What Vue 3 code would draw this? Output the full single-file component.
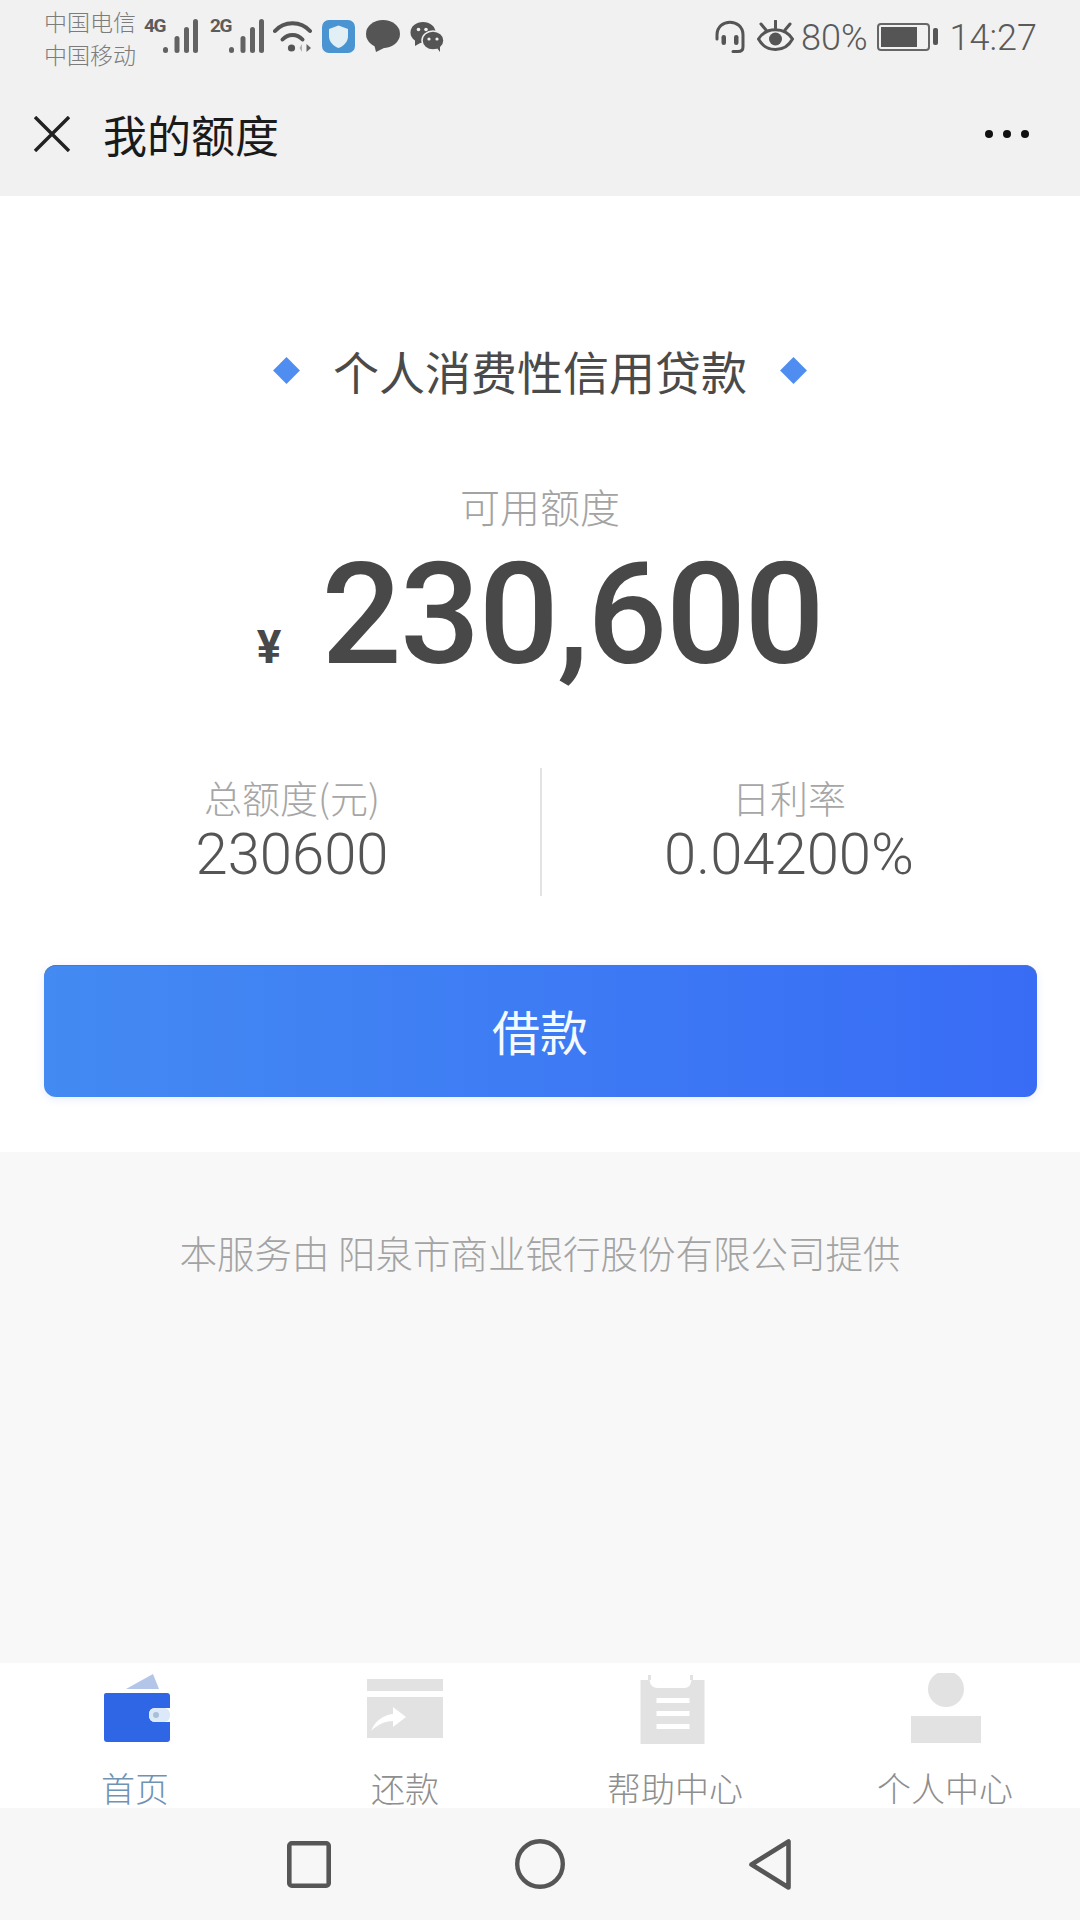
<script setup>
const signal = [
  { x: 0, h: 6 },
  { x: 11.5, h: 17 },
  { x: 21, h: 26 },
  { x: 30, h: 34 }
]
const stats = [
  { label: '总额度(元)', value: '230600' },
  { label: '日利率', value: '0.04200%' }
]
const tabs = ['首页', '还款', '帮助中心', '个人中心']
</script>

<template>
  <div class="page">
    <header class="header">
      <div class="status">
        <div class="carriers"><span>中国电信</span><span>中国移动</span></div>
        <span class="net first">4G</span>
        <svg class="bars" width="35" height="34" viewBox="0 0 35 34">
          <rect v-for="b in signal" :key="b.x" :x="b.x" :y="34 - b.h" width="5" :height="b.h" rx="2.500" fill="#626262" />
        </svg>
        <span class="net second">2G</span>
        <svg class="bars" width="35" height="34" viewBox="0 0 35 34">
          <rect v-for="b in signal" :key="b.x" :x="b.x" :y="34 - b.h" width="5" :height="b.h" rx="2.500" fill="#626262" />
        </svg>
        <svg class="wifi" width="40" height="33" viewBox="0 0 40 33" fill="none" stroke="#555" stroke-width="4" stroke-linecap="round">
          <path d="M2 11 C11 0.500 28 0.500 37 11" />
          <path d="M9.500 19.500 C15 13.500 24 13.500 29.500 19.500" />
          <circle cx="18.500" cy="28" r="3.600" fill="#555" stroke="none" />
          <path d="M29 24 L26.500 28 L29 32 Z" fill="#b0b0b0" stroke="none" />
          <path d="M33.500 24 L38 28 L33.500 32 Z" fill="#666" stroke="none" />
        </svg>
        <svg class="shield" width="33" height="33" viewBox="0 0 33 33">
          <rect width="33" height="33" rx="7" fill="#4a95d1" />
          <path d="M16.500 5.500 L26 9 V16 C26 22 21.500 26 16.500 28 C11.500 26 7 22 7 16 V9 Z" fill="#e2f0f5" />
        </svg>
        <svg class="chat" width="34" height="32" viewBox="0 0 34 32">
          <ellipse cx="17" cy="14" rx="17" ry="14" fill="#555" />
          <path d="M8 24 L10 32 L20 27 Z" fill="#555" />
        </svg>
        <svg class="wechat" width="34" height="30" viewBox="0 0 34 30">
          <ellipse cx="13" cy="10.500" rx="12.500" ry="10.500" fill="#555" />
          <path d="M5 17 L5 24 L12 20 Z" fill="#555" />
          <ellipse cx="23" cy="18.500" rx="11" ry="9.500" fill="#555" stroke="#f1f1f1" stroke-width="1.500" />
          <path d="M27 26 L30 30 L30 24 Z" fill="#555" />
          <circle cx="8.500" cy="7.500" r="1.800" fill="#f1f1f1" />
          <circle cx="16" cy="7.500" r="1.800" fill="#f1f1f1" />
          <circle cx="19" cy="17" r="1.600" fill="#f1f1f1" />
          <circle cx="27" cy="17" r="1.600" fill="#f1f1f1" />
        </svg>
        <div class="spacer"></div>
        <svg class="headset" width="30" height="33" viewBox="0 0 30 33" fill="none" stroke="#555" stroke-width="3" stroke-linecap="round">
          <path d="M2 19 V15 C2 -2 28 -2 28 15 V27 C28 30 26 31.500 23 31.500 H18" />
          <rect x="6.500" y="15" width="4.500" height="10" rx="2.200" fill="#555" stroke="none" />
          <rect x="19" y="15" width="4.500" height="10" rx="2.200" fill="#555" stroke="none" />
        </svg>
        <svg class="eye" width="37" height="32" viewBox="0 0 37 32" fill="none" stroke="#555" stroke-width="3" stroke-linecap="round">
          <path d="M1.500 19 C9 6.500 28 6.500 35.500 19 C28 33 9 33 1.500 19 Z" />
          <circle cx="18.500" cy="19" r="6.500" fill="#555" stroke="none" />
          <path d="M18.500 1 V8 M4 4 L9 10 M33 4 L28 10" />
        </svg>
        <span class="pct">80%</span>
        <div class="battery"><div class="battery-fill"></div></div>
        <div class="battery-tip"></div>
        <span class="clock">14:27</span>
      </div>
      <div class="titlebar">
        <svg class="close" width="36" height="36" viewBox="0 0 36 36" stroke="#222" stroke-width="3.400">
          <path d="M1 1 L35 35 M35 1 L1 35" />
        </svg>
        <h1 class="title">我的额度</h1>
        <div class="dots"><i></i><i></i><i></i></div>
      </div>
    </header>

    <main class="card">
      <div class="product">
        <span class="diamond"></span>
        <span>个人消费性信用贷款</span>
        <span class="diamond"></span>
      </div>
      <div class="avail-label">可用额度</div>
      <div class="amount">
        <span class="yen">¥</span>
        <span class="figure">230,600</span>
      </div>
      <div class="stats">
        <div v-for="s in stats" :key="s.label" class="stat">
          <div class="stat-label">{{ s.label }}</div>
          <div class="stat-value">{{ s.value }}</div>
        </div>
      </div>
      <button class="borrow">借款</button>
    </main>

    <section class="provider">本服务由 阳泉市商业银行股份有限公司提供</section>

    <nav class="tabs">
      <div v-for="(t, i) in tabs" :key="t" class="tab" :class="{ active: i === 0 }">
        <svg class="tab-icon" width="80" height="76" viewBox="0 0 80 76">
          <g v-if="i === 0" transform="translate(2 0)">
            <path d="M29 16 L56 1 L62 16 Z" fill="#b3c5e9" />
            <path d="M7 22 Q7 20 9 20 H70 Q73 20 73 23 V35 H58 Q52 35 52 42 Q52 49 58 49 H73 V66 Q73 69 70 69 H10 Q7 69 7 66 Z" fill="#2f66e6" />
            <rect x="52" y="35" width="21" height="14" rx="6" fill="#dce9f8" />
            <circle cx="59" cy="42" r="3" fill="#a9bfd8" />
          </g>
          <g v-else-if="i === 1" fill="#e2e2e2">
            <rect x="2" y="6" width="76" height="12" />
            <rect x="2" y="24" width="76" height="41" />
            <path d="M6 58 C10 48 18 42 28 41 V34 L41 44 L28 54 V48 C20 48 12 52 6 58 Z" fill="#fff" />
          </g>
          <g v-else-if="i === 2" transform="translate(-2.500 0)">
            <rect x="8" y="7" width="64" height="64" fill="#e2e2e2" />
            <path d="M17 2 V12 M59 2 V12" stroke="#e2e2e2" stroke-width="3" />
            <path d="M17 7 Q18 15 25 15 H52 Q58 15 59 7" fill="#fff" />
            <rect x="24" y="25" width="33" height="5" fill="#fff" />
            <rect x="24" y="38" width="33" height="5" fill="#fff" />
            <rect x="24" y="51" width="33" height="5" fill="#fff" />
          </g>
          <g v-else fill="#e2e2e2">
            <circle cx="41" cy="16" r="18" />
            <rect x="6" y="43" width="70" height="27" />
          </g>
        </svg>
        <span class="tab-label">{{ t }}</span>
      </div>
    </nav>

    <footer class="navbar">
      <svg width="44" height="47" viewBox="0 0 44 47" fill="none" stroke="#565656" stroke-width="4.600">
        <rect x="2.300" y="2.300" width="39.400" height="42.400" rx="2.500" />
      </svg>
      <svg width="50" height="50" viewBox="0 0 50 50" fill="none" stroke="#565656" stroke-width="4.400">
        <circle cx="25" cy="25" r="22.800" />
      </svg>
      <svg width="42" height="51" viewBox="0 0 42 51" fill="none" stroke="#565656" stroke-width="4.600" stroke-linejoin="round">
        <path d="M39.500 2.500 V48.500 L2.500 25.500 Z" />
      </svg>
    </footer>
  </div>
</template>

<style>
html, body { margin: 0; padding: 0; background: #f8f8f8; }
</style>

<style scoped>
.page {
  width: 1080px;
  height: 1920px;
  display: flex;
  flex-direction: column;
  overflow: hidden;
  background: #f8f8f8;
  font-family: "Noto Sans CJK SC", "Noto Sans", sans-serif;
}
.header {
  height: 196px;
  flex: none;
  background: #f1f1f1;
}
.status {
  height: 72px;
  display: flex;
  align-items: center;
  padding: 0 43px 0 44px;
  box-sizing: border-box;
  color: #666;
}
.carriers {
  width: 93px;
  display: flex;
  flex-direction: column;
  font-size: 23px;
  line-height: 33px;
  color: #7c7c7c;
  font-weight: 300;
  margin-top: 3px;
  white-space: nowrap;
}
.net {
  font-family: "Roboto", sans-serif;
  font-weight: 700;
  font-size: 19px;
  line-height: 18px;
  width: 19px;
  color: #5c5c5c;
  letter-spacing: -1.500px;
  align-self: flex-start;
  margin-top: 17px;
}
.first { margin-left: 7px; }
.second { margin-left: 12px; }
.wifi { margin-left: 9px; }
.shield { margin-left: 9px; }
.chat { margin-left: 11px; }
.wechat { margin-left: 10px; margin-top: 1px; }
.spacer { flex: 1; }
.eye { margin-left: 12px; }
.pct, .clock {
  font-family: "Roboto", sans-serif;
  font-weight: 300;
  font-size: 36px;
  line-height: 40px;
  color: #5a5a5a;
  white-space: nowrap;
  margin-top: 4px;
}
.pct { margin-left: 7px; margin-right: -2px; }
.battery {
  width: 53px;
  height: 28px;
  margin-left: 11px;
  box-sizing: border-box;
  border: 2px solid #666;
  border-radius: 4px;
  padding: 2px;
  margin-top: 1px;
}
.battery-fill { width: 36px; height: 100%; background: #555; }
.battery-tip {
  width: 5px;
  height: 17px;
  margin-left: 3px;
  background: #555;
  border-radius: 2px;
  margin-top: 1px;
}
.clock { margin-left: 12px; }
.titlebar {
  height: 124px;
  display: flex;
  align-items: center;
  padding: 0 51px 0 34px;
  box-sizing: border-box;
}
.close { flex: none; }
.title {
  margin: 0 0 0 33px;
  font-size: 44px;
  line-height: 60px;
  font-weight: 400;
  color: #1a1a1a;
  flex: 1;
}
.dots { display: flex; gap: 10px; }
.dots i {
  display: block;
  width: 8px;
  height: 8px;
  border-radius: 50%;
  background: #111;
}
.card {
  flex: none;
  background: #fff;
  height: 956px;
  box-sizing: border-box;
  padding: 144px 44px 55px;
  display: flex;
  flex-direction: column;
  align-items: center;
}
.product {
  height: 60px;
  display: flex;
  align-items: center;
  gap: 37px;
  font-size: 46px;
  line-height: 60px;
  color: #4a4a4a;
  font-weight: 400;
}
.diamond {
  width: 19px;
  height: 19px;
  background: #4f8ef0;
  transform: rotate(45deg);
}
.avail-label {
  margin-top: 81px;
  margin-bottom: 1px;
  font-size: 40px;
  line-height: 50px;
  color: #a3a3a3;
  font-weight: 300;
}
.amount {
  margin-top: 13px;
  display: flex;
  align-items: baseline;
  gap: 40px;
  height: 140px;
  color: #484848;
  font-family: "Roboto", sans-serif;
}
.yen { font-size: 46px; line-height: 1; font-weight: 700; }
.figure { font-size: 141px; line-height: 140px; font-weight: 500; letter-spacing: -1.500px; }
.stats {
  margin-top: 83px;
  width: 100%;
  height: 128px;
  flex: none;
  display: grid;
  grid-template-columns: 1fr 1fr;
}
.stat {
  padding-top: 7px;
  text-align: center;
  box-sizing: border-box;
}
.stat + .stat { border-left: 2px solid #e3e3e3; }
.stat-label {
  font-size: 38px;
  line-height: 44px;
  color: #a6a6a6;
  font-weight: 300;
}
.stat-value {
  margin-top: 2px;
  font-family: "Roboto", sans-serif;
  font-weight: 300;
  font-size: 58px;
  line-height: 66px;
  color: #555;
}
.borrow {
  margin-top: 69px;
  width: 993px;
  height: 132px;
  flex: none;
  border: none;
  border-radius: 12px;
  background: linear-gradient(90deg, #438af2, #386cf5);
  box-shadow: 0 2px 8px rgba(60, 110, 240, 0.12), inset 0 1px 0 #5079b8;
  color: #f4fbff;
  font-family: inherit;
  font-size: 48px;
  font-weight: 400;
  padding: 0 0 3px;
}
.provider {
  flex: 1;
  padding-top: 78px;
  text-align: center;
  font-size: 37.500px;
  line-height: 44px;
  color: #a3a3a3;
  font-weight: 300;
  white-space: pre;
}
.tabs {
  height: 145px;
  flex: none;
  background: #fff;
  display: grid;
  grid-template-columns: repeat(4, 1fr);
}
.tab {
  display: flex;
  flex-direction: column;
  align-items: center;
  color: #8e8e8e;
}
.tab-icon { margin-top: 10px; flex: none; }
.tab-label {
  font-size: 34px;
  line-height: 40px;
  margin-top: 19px;
  white-space: nowrap;
  font-weight: 300;
}
.active { color: #6f93b5; }
.navbar {
  height: 112px;
  flex: none;
  background: #f7f7f7;
  display: flex;
  align-items: center;
  justify-content: center;
  gap: 184px;
  padding-right: 2px;
  box-sizing: border-box;
}
</style>
